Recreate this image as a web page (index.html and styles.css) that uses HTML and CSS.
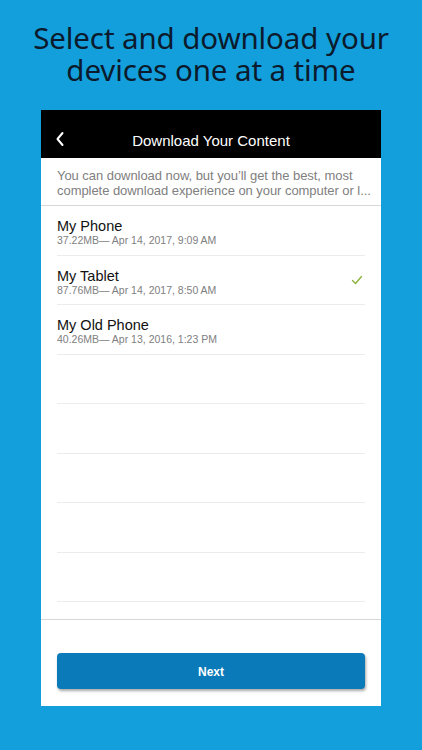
FILE: index.html
```html
<!DOCTYPE html>
<html>
<head>
<meta charset="utf-8">
<link rel="stylesheet" href="styles.css">
</head>
<body>
<div class="page">
  <h1 class="headline"><span class="hl">Select and download your</span><span class="hl">devices one at a time</span></h1>
  <div class="screen">
    <div class="topbar">
      <svg class="back" width="10" height="16" viewBox="0 0 10 16"><path d="M7.5 2 L2.5 8 L7.5 14" fill="none" stroke="#fff" stroke-width="2" stroke-linecap="round" stroke-linejoin="round"/></svg>
      <div class="title">Download Your Content</div>
    </div>
    <div class="desc">
      <span class="desc-line">You can download now, but you’ll get the best, most</span>
      <span class="desc-line">complete download experience on your computer or l...</span>
    </div>
    <div class="list">
      <div class="row"><div class="info"><div class="name">My Phone</div><div class="meta">37.22MB— Apr 14, 2017, 9:09 AM</div></div></div>
      <div class="row"><div class="info"><div class="name">My Tablet</div><div class="meta">87.76MB— Apr 14, 2017, 8:50 AM</div></div>
        <svg class="check" width="12" height="10" viewBox="0 0 12 10"><path d="M1.5 5.5 L4.5 8.5 L10.5 1.5" fill="none" stroke="#8db33f" stroke-width="1.4" stroke-linecap="round" stroke-linejoin="round"/></svg></div>
      <div class="row"><div class="info"><div class="name">My Old Phone</div><div class="meta">40.26MB— Apr 13, 2016, 1:23 PM</div></div></div>
      <div class="row"></div>
      <div class="row"></div>
      <div class="row"></div>
      <div class="row"></div>
      <div class="row"></div>
    </div>
    <div class="footer">
      <button class="next">Next</button>
    </div>
  </div>
</div>
</body>
</html>
```
FILE: styles.css
```css
html, body { margin: 0; padding: 0; }
body { background: #139fdb; width: 422px; height: 750px; overflow: hidden; }
.page { display: flex; flex-direction: column; align-items: center; }
.headline {
  margin: 22px 0 0 0;
  font-family: "Noto Sans", sans-serif;
  font-weight: 400;
  font-size: 29.5px;
  line-height: 32px;
  color: #0b1a2c;
  text-align: center;
  letter-spacing: -0.1px;
  height: 64px;
  display: flex;
  flex-direction: column;
  align-items: center;
}
.hl { display: block; }
.screen {
  margin-top: 24px;
  width: 340px;
  height: 596px;
  background: #fff;
  display: flex;
  flex-direction: column;
  font-family: "Liberation Sans", Arial, sans-serif;
}
.topbar {
  height: 48px;
  background: #000;
  display: flex;
  align-items: center;
  justify-content: center;
  position: relative;
}
.back { position: absolute; left: 14px; top: 21px; }
.title { color: #fff; font-size: 15px; margin-top: 12px; }
.desc {
  height: 48px;
  box-sizing: border-box;
  padding: 10px 8px 0 16px;
  border-bottom: 1px solid #d8d8d8;
  display: flex;
  flex-direction: column;
}
.desc-line {
  display: block;
  white-space: nowrap;
  font-size: 13px;
  line-height: 15px;
  color: #808080;
  letter-spacing: -0.05px;
}
.list { padding: 0 16px; display: flex; flex-direction: column; }
.row {
  height: 49.5px;
  box-sizing: border-box;
  border-bottom: 1px solid #ececec;
  display: flex;
  align-items: center;
  justify-content: space-between;
}
.info { padding-top: 4px; }
.name { font-size: 14.5px; line-height: 16px; color: #111; }
.meta { font-size: 10.5px; line-height: 12px; color: #808080; }
.check { margin-right: 2px; margin-top: 0; }
.footer {
  margin-top: 17px;
  border-top: 1px solid #d8d8d8;
  flex: 1;
  padding: 33px 16px 0 16px;
}
.next {
  width: 308px;
  height: 36px;
  border: none;
  border-radius: 4px;
  background: #0a7ab8;
  color: #fff;
  font-family: "Liberation Sans", Arial, sans-serif;
  font-size: 12px;
  font-weight: bold;
  padding-top: 3px;
  box-shadow: 1px 2px 3px rgba(0,0,0,0.35);
  display: block;
}
```
